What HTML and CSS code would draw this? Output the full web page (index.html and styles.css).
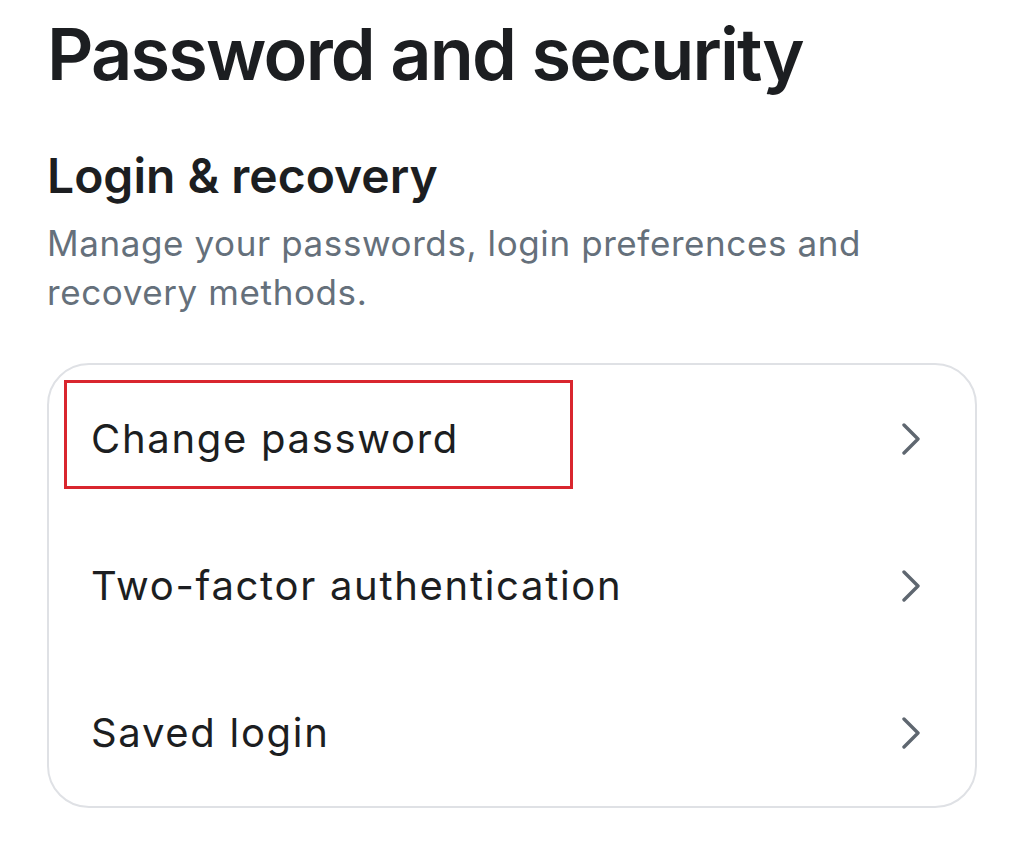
FILE: index.html
```html
<!DOCTYPE html>
<html lang="en">
<head>
<meta charset="utf-8">
<title>Password and security</title>
<link rel="stylesheet" href="styles.css">
</head>
<body>
<main class="page">
  <h1 class="title">Password and security</h1>
  <h2 class="section-title">Login &amp; recovery</h2>
  <p class="section-desc">Manage your passwords, login preferences and recovery methods.</p>
  <div class="card">
    <div class="highlight"></div>
    <a class="row" href="#"><span class="row-label">Change password</span><svg class="chev" viewBox="0 0 20 32" width="20" height="32"><path d="M3 2 L17 16 L3 30" fill="none" stroke="currentColor" stroke-width="3.4" stroke-linecap="round" stroke-linejoin="round"/></svg></a>
    <a class="row" href="#"><span class="row-label">Two-factor authentication</span><svg class="chev" viewBox="0 0 20 32" width="20" height="32"><path d="M3 2 L17 16 L3 30" fill="none" stroke="currentColor" stroke-width="3.4" stroke-linecap="round" stroke-linejoin="round"/></svg></a>
    <a class="row" href="#"><span class="row-label">Saved login</span><svg class="chev" viewBox="0 0 20 32" width="20" height="32"><path d="M3 2 L17 16 L3 30" fill="none" stroke="currentColor" stroke-width="3.4" stroke-linecap="round" stroke-linejoin="round"/></svg></a>
  </div>
</main>
</body>
</html>
```
FILE: styles.css
```css
* { box-sizing: border-box; }
html, body { margin: 0; padding: 0; background: #ffffff; }
body {
  font-family: Inter, "Noto Sans", "Liberation Sans", sans-serif;
  color: #1c1e21;
}
.page {
  padding: 11px 47px 0 47px;
  width: 1024px;
}
.title {
  margin: 0;
  font-size: 72px;
  line-height: 86px;
  font-weight: 600;
  letter-spacing: -1.8px;
}
.section-title {
  margin: 50px 0 0 0;
  font-size: 48px;
  line-height: 58px;
  font-weight: 600;
}
.section-desc {
  margin: 14px 0 0 0;
  font-size: 35px;
  line-height: 49px;
  letter-spacing: 0.6px;
  color: #65707b;
  width: 900px;
}
.card {
  position: relative;
  margin-top: 46px;
  width: 930px;
  border: 2px solid #dfe1e5;
  border-radius: 42px;
  display: flex;
  flex-direction: column;
  padding: 0;
}
.row {
  display: flex;
  align-items: center;
  justify-content: space-between;
  height: 147px;
  padding: 0 54px 0 42px;
  text-decoration: none;
  color: #1c1e21;
}
.row-label {
  font-size: 40px;
  font-weight: 400;
  letter-spacing: 1.7px;
}
.chev { color: #5f6770; display: block; }
.highlight {
  position: absolute;
  left: 15px;
  top: 15px;
  width: 509px;
  height: 109px;
  border: 3px solid #d9262e;
  pointer-events: none;
}
```
